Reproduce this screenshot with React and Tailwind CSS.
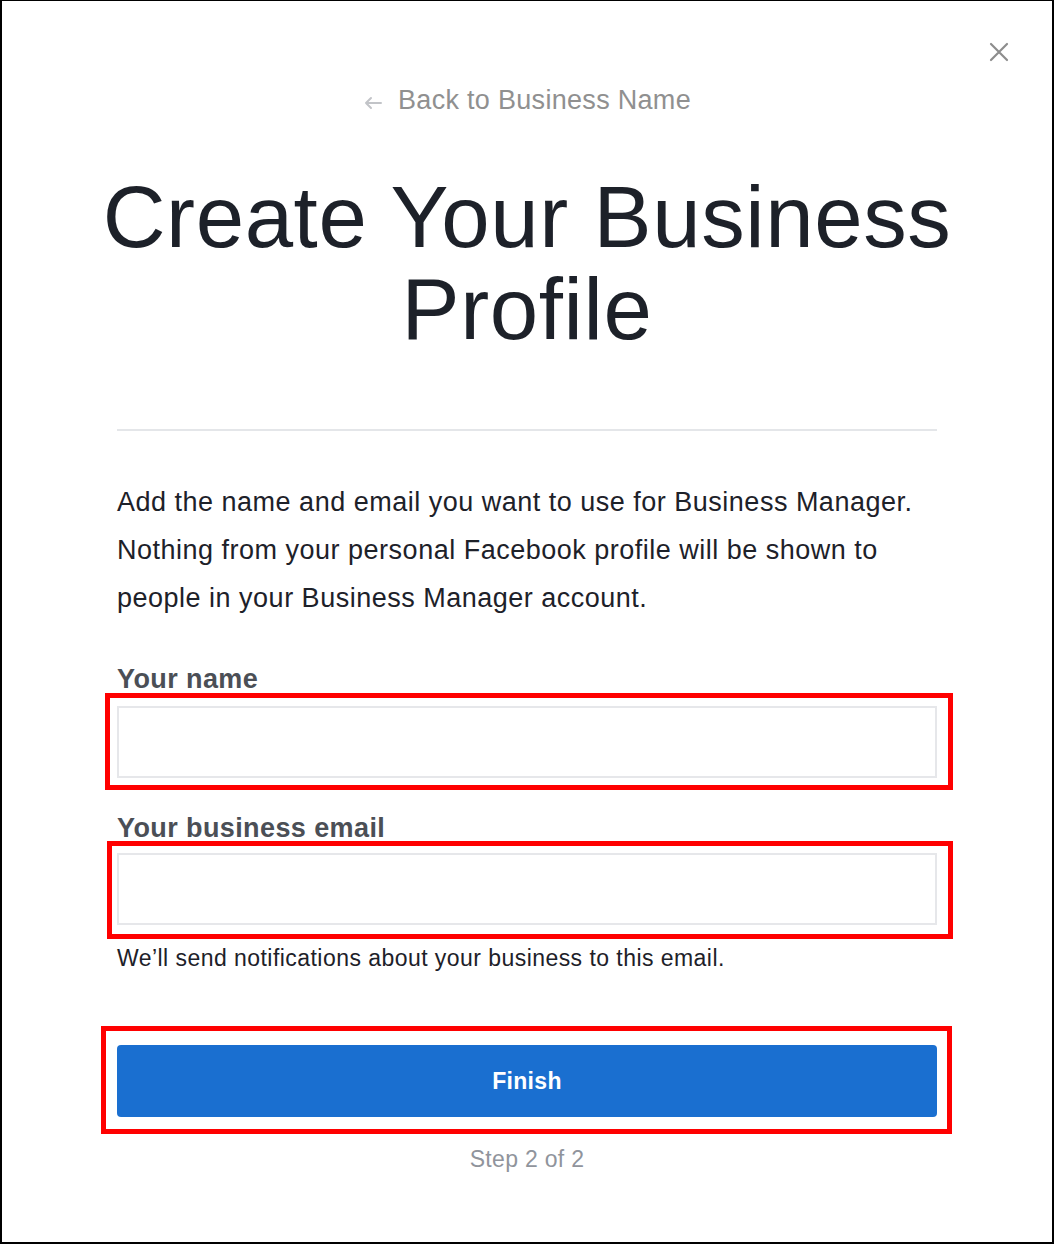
import { useState } from 'react';

const font = { fontFamily: '"Liberation Sans", Arial, Helvetica, sans-serif' };

function CloseIcon() {
  return (
    <svg width="20" height="20" viewBox="0 0 20 20" fill="none">
      <path d="M2 2L18 18M18 2L2 18" stroke="#8d8d8d" strokeWidth="2.2" strokeLinecap="round" />
    </svg>
  );
}

function BackArrow() {
  return (
    <svg width="20" height="14" viewBox="0 0 20 14" fill="none">
      <path d="M18 7H3M8 2L3 7l5 5" stroke="#c2c4c8" strokeWidth="2" strokeLinecap="round" strokeLinejoin="round" />
    </svg>
  );
}

export default function App() {
  const [name, setName] = useState('');
  const [email, setEmail] = useState('');

  return (
    <div
      className="relative w-[1054px] h-[1244px] bg-white border-l-2 border-t border-r-2 border-b-2 border-black overflow-hidden"
      style={font}
    >
      <button className="absolute top-[41px] right-[43px] p-0">
        <CloseIcon />
      </button>

      <div className="w-[820px] mx-auto pt-[83px] flex flex-col">
        <a href="#" className="flex items-center justify-center gap-[15px] h-[32px] text-[27px] tracking-[0.3px] text-[#909090] leading-[32px]">
          <span className="mt-[6px]"><BackArrow /></span>
          <span>Back to Business Name</span>
        </a>

        <h1 className="mt-[55px] -mx-[40px] text-center text-[87px] leading-[92px] text-[#1d2129] tracking-[0.6px]">
          Create Your Business Profile
        </h1>

        <div className="mt-[74px] h-[2px] bg-[#e4e6e9]" />

        <p className="mt-[47px] text-[27px] tracking-[0.5px] leading-[48px] text-[#1d2129]">
          Add the name and email you want to use for Business Manager. Nothing from your personal Facebook profile will be shown to people in your Business Manager account.
        </p>

        <label className="mt-[43px] text-[27px] tracking-[0.4px] leading-[28px] font-bold text-[#4b4f56]">Your name</label>
        <div className="-ml-[12px] -mr-[16px] border-[5px] border-[#ff0000] pl-[7px] pr-[11px] pt-[8px] pb-[7px]">
          <input
            value={name}
            onChange={(e) => setName(e.target.value)}
            className="block w-full h-[72px] border-2 border-[#e6e7ea] bg-white outline-none px-3 text-[24px]"
          />
        </div>

        <label className="mt-[24px] text-[27px] tracking-[0.4px] leading-[28px] font-bold text-[#4b4f56]">Your business email</label>
        <div className="-mt-[1px] -ml-[10px] -mr-[16px] border-[5px] border-[#ff0000] pl-[5px] pr-[11px] pt-[7px] pb-[9px]">
          <input
            value={email}
            onChange={(e) => setEmail(e.target.value)}
            className="block w-full h-[72px] border-2 border-[#e6e7ea] bg-white outline-none px-3 text-[24px]"
          />
        </div>
        <p className="mt-[5px] text-[23px] tracking-[0.45px] leading-[28px] text-[#1d2129]">
          We’ll send notifications about your business to this email.
        </p>

        <div className="mt-[54px] -ml-[16px] -mr-[15px] border-[5px] border-[#ff0000] pl-[11px] pr-[10px] pt-[14px] pb-[12px]">
          <button className="block w-full h-[72px] rounded-[4px] bg-[#1a6fd0] text-white font-bold text-[23px] tracking-[0.3px]">
            Finish
          </button>
        </div>

        <p className="mt-[10px] text-center text-[23px] tracking-[0.3px] leading-[30px] text-[#90949c]">Step 2 of 2</p>
      </div>
    </div>
  );
}
